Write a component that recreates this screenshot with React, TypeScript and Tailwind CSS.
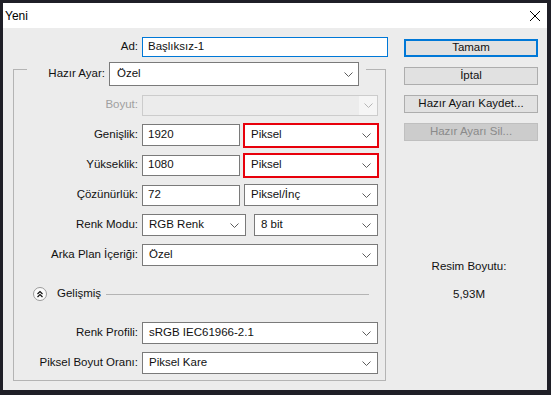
import React from "react";

const Chevron: React.FC<{ color?: string }> = ({ color = "#5c5c5c" }) => (
  <svg width="9" height="5" viewBox="0 0 9 5" fill="none">
    <polyline points="0.5,0.5 4.5,4.5 8.5,0.5" stroke={color} strokeWidth="1" />
  </svg>
);

interface SelectProps {
  value: string;
  className?: string;
  red?: boolean;
}

const Select: React.FC<SelectProps> = ({ value, className = "", red }) => (
  <div
    className={`h-[22px] bg-white border border-[#7a7a7a] flex items-center justify-between pl-[6px] pr-[6px] ${
      red ? "outline-2 outline-[#e8000b] -outline-offset-1" : ""
    } ${className}`}
  >
    <span className="whitespace-nowrap">{value}</span>
    <Chevron />
  </div>
);

const Row: React.FC<{ label: string; children: React.ReactNode; muted?: boolean }> = ({
  label,
  children,
  muted,
}) => (
  <div className="flex items-center h-[22px] gap-[4px]">
    <span className={`w-[124px] text-right whitespace-nowrap ${muted ? "text-[#a0a0a0]" : ""}`}>
      {label}
    </span>
    {children}
  </div>
);

const Button: React.FC<{ label: string; primary?: boolean; disabled?: boolean }> = ({
  label,
  primary,
  disabled,
}) => (
  <div
    className={`h-[18px] flex items-center justify-center ${
      primary
        ? "bg-[#e1e1e1] border-2 border-[#0078d7]"
        : disabled
        ? "bg-[#cccccc] border border-[#bfbfbf] text-[#8a8a8a]"
        : "bg-[#e1e1e1] border border-[#adadad]"
    }`}
  >
    {label}
  </div>
);

export default function App() {
  return (
    <div className="w-[551px] h-[395px] bg-[#1f1f27] pt-[3px] pl-[3px] pr-[4px] pb-[5px] flex flex-col font-['Liberation_Sans',Arial,sans-serif] text-[11.5px] text-[#111]">
      {/* Title bar */}
      <div className="h-[25px] bg-white flex items-center justify-between pl-[2px] pr-[7px]">
        <span className="text-[12px] text-black">Yeni</span>
        <svg width="10" height="10" viewBox="0 0 10 10">
          <path d="M0 0L10 10M10 0L0 10" stroke="#000" strokeWidth="1" />
        </svg>
      </div>

      {/* Body */}
      <div className="flex-1 bg-[#ececec] flex">
        {/* Left column */}
        <div className="w-[401px] pt-[9px] flex flex-col">
          <div className="flex items-center h-[20px] gap-[4px]">
            <span className="w-[135px] text-right">Ad:</span>
            <div className="w-[246px] h-[20px] bg-white border border-[#0078d7] flex items-center pl-[5px]">
              Başlıksız-1
            </div>
          </div>

          {/* Group box */}
          <div className="mt-[5px] ml-[10px] w-[373px] flex flex-col">
            <div className="flex h-[24px]">
              <div className="w-[14px] flex flex-col">
                <div className="h-[7px]" />
                <div className="flex-1 border-t border-l border-[#b4b4b4]" />
              </div>
              <span className="w-[78px] text-right self-center">Hazır Ayar:</span>
              <div className="ml-[4px] w-[250px] h-[24px] bg-white border border-[#7a7a7a] flex items-center justify-between pl-[7px] pr-[5px]">
                <span>Özel</span>
                <Chevron />
              </div>
              <div className="w-[7px]" />
              <div className="flex-1 flex flex-col">
                <div className="h-[7px]" />
                <div className="flex-1 border-t border-r border-[#b4b4b4]" />
              </div>
            </div>

            <div className="border-l border-r border-b border-[#b4b4b4] pt-[8px] pb-[6px] pr-[7px] flex flex-col gap-[8px]">
              <Row label="Boyut:" muted>
                <div className="flex-1 h-[21px] border border-[#cccccc] bg-[#ececec] flex justify-end">
                  <div className="w-[18px] bg-[#f5f5f5] flex items-center justify-center">
                    <Chevron color="#b5b5b5" />
                  </div>
                </div>
              </Row>
              <Row label="Genişlik:">
                <div className="w-[98px] h-[22px] bg-white border border-[#7a7a7a] flex items-center pl-[5px]">
                  1920
                </div>
                <Select value="Piksel" red className="flex-1 h-[23px]" />
              </Row>
              <Row label="Yükseklik:">
                <div className="w-[98px] h-[21px] bg-white border border-[#7a7a7a] flex items-center pl-[5px]">
                  1080
                </div>
                <Select value="Piksel" red className="flex-1 h-[23px]" />
              </Row>
              <Row label="Çözünürlük:">
                <div className="w-[98px] h-[21px] bg-white border border-[#7a7a7a] flex items-center pl-[5px]">
                  72
                </div>
                <Select value="Piksel/İnç" className="flex-1 h-[21px]" />
              </Row>
              <Row label="Renk Modu:">
                <Select value="RGB Renk" className="w-[104px] h-[21px]" />
                <Select value="8 bit" className="ml-[4px] flex-1 h-[21px]" />
              </Row>
              <Row label="Arka Plan İçeriği:">
                <Select value="Özel" className="flex-1" />
              </Row>

              <div className="mt-[13px] h-[14px] flex items-center">
                <svg width="14" height="14" viewBox="0 0 14 14" className="ml-[19px]">
                  <circle cx="7" cy="7" r="6.5" fill="#fbfbfb" stroke="#9a9a9a" />
                  <polyline points="4.5,7 7,4.5 9.5,7" fill="none" stroke="#111" strokeWidth="1.2" />
                  <polyline points="4.5,10 7,7.5 9.5,10" fill="none" stroke="#111" strokeWidth="1.2" />
                </svg>
                <span className="ml-[10px]">Gelişmiş</span>
                <div className="flex-1 ml-[5px] mr-[9px] h-px bg-[#b4b4b4]" />
              </div>

              <div className="mt-[13px] flex flex-col gap-[8px]">
                <Row label="Renk Profili:">
                  <Select value="sRGB IEC61966-2.1" className="flex-1" />
                </Row>
                <Row label="Piksel Boyut Oranı:">
                  <Select value="Piksel Kare" className="flex-1" />
                </Row>
              </div>
            </div>
          </div>
        </div>

        {/* Right column */}
        <div className="w-[134px] pt-[11px] flex flex-col">
          <div className="flex flex-col gap-[10px]">
            <Button label="Tamam" primary />
            <Button label="İptal" />
            <Button label="Hazır Ayarı Kaydet..." />
            <Button label="Hazır Ayarı Sil..." disabled />
          </div>
          <div className="mt-[117px] flex flex-col items-center gap-[11px] pr-[4px]">
            <span>Resim Boyutu:</span>
            <span>5,93M</span>
          </div>
        </div>
      </div>
    </div>
  );
}
